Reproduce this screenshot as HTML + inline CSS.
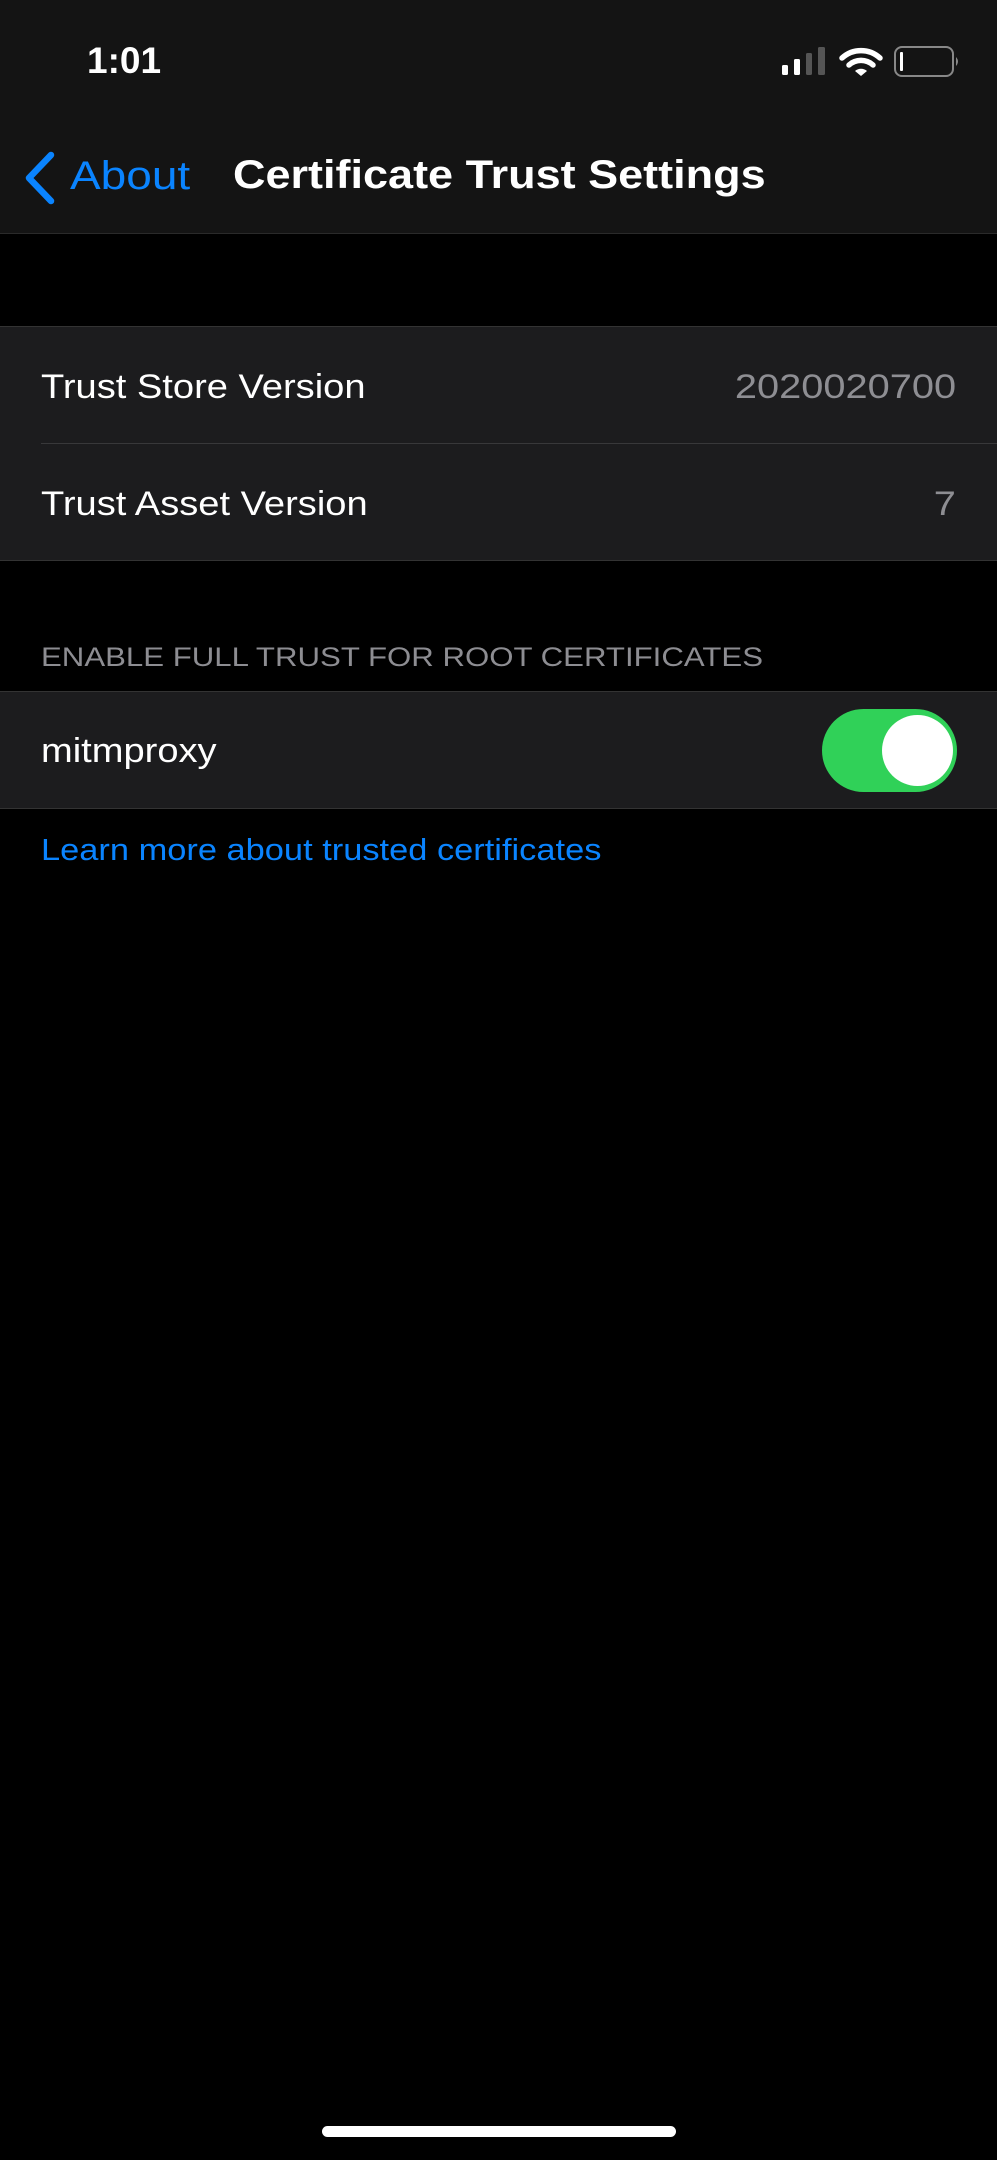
<!DOCTYPE html>
<html><head><meta charset="utf-8"><style>
*{margin:0;padding:0;box-sizing:border-box}
body{width:997px;height:2160px;background:#000;font-family:"Liberation Sans",sans-serif;position:relative;overflow:hidden;color:#fff}
.abs{position:absolute;white-space:nowrap}
.nav{left:0;top:0;width:997px;height:234px;background:#141414;border-bottom:1px solid #2a2a2a}
.row{left:0;width:997px;background:#1c1c1e}
.lbl{position:absolute;left:41px;font-size:34px;line-height:1;color:#fff;transform:scaleX(1.12);transform-origin:left;white-space:nowrap}
.val{position:absolute;right:41px;font-size:34px;line-height:1;color:#8e8e93;transform:scaleX(1.17);transform-origin:right;white-space:nowrap}
</style></head><body>
<div class="abs nav"></div>
<div class="abs" style="left:87px;top:42px;font-size:37px;font-weight:bold;line-height:1">1:01</div>
<svg class="abs" style="left:780px;top:44px" width="185" height="36" viewBox="780 44 185 36">
<rect x="782" y="65" width="6" height="10" rx="1.5" fill="#fff"/>
<rect x="794" y="59" width="6" height="16" rx="1.5" fill="#fff"/>
<rect x="806" y="53" width="6" height="22" rx="1.5" fill="#555"/>
<rect x="818" y="47" width="7" height="28" rx="1.5" fill="#555"/>
<path d="M842 58 A28 28 0 0 1 880 58" stroke="#fff" stroke-width="5.5" fill="none" stroke-linecap="round"/>
<path d="M849 65 A18 18 0 0 1 873 65" stroke="#fff" stroke-width="5.5" fill="none" stroke-linecap="round"/>
<path d="M855 71 L861 76 L867 71 A9 9 0 0 0 855 71Z" fill="#fff"/>
<rect x="895" y="47" width="58" height="29" rx="7" fill="none" stroke="#888" stroke-width="2"/>
<rect x="900" y="52" width="3" height="19" rx="1" fill="#fff"/>
<path d="M956 57 Q960 61.5 956 66Z" fill="#888"/>
</svg>
<svg class="abs" style="left:20px;top:150px" width="40" height="56" viewBox="0 0 40 56"><path d="M31 5 L9 28 L31 51" stroke="#0a84ff" stroke-width="6.5" fill="none" stroke-linecap="round" stroke-linejoin="round"/></svg>
<div class="abs" style="left:70px;top:156px;font-size:40px;color:#0a84ff;line-height:1;transform:scaleX(1.15);transform-origin:left">About</div>
<div class="abs" style="left:233px;top:155px;font-size:40px;font-weight:bold;line-height:1;transform:scaleX(1.125);transform-origin:left">Certificate Trust Settings</div>

<div class="abs row" style="top:326px;height:235px;border-top:1px solid #333;border-bottom:1px solid #333"></div>
<div class="abs" style="left:41px;top:443px;width:956px;height:1px;background:#38383a"></div>
<div class="lbl" style="top:370px">Trust Store Version</div>
<div class="val" style="top:370px">2020020700</div>
<div class="lbl" style="top:487px">Trust Asset Version</div>
<div class="val" style="top:487px">7</div>

<div class="abs" style="left:41px;top:644px;font-size:27px;color:#8d8d92;line-height:1;transform:scaleX(1.155);transform-origin:left">ENABLE FULL TRUST FOR ROOT CERTIFICATES</div>
<div class="abs row" style="top:691px;height:118px;border-top:1px solid #333;border-bottom:1px solid #333"></div>
<div class="lbl" style="top:734px">mitmproxy</div>
<div class="abs" style="left:822px;top:709px;width:135px;height:83px;border-radius:42px;background:#30d158"></div>
<div class="abs" style="left:882px;top:715px;width:71px;height:71px;border-radius:50%;background:#fff"></div>

<div class="abs" style="left:41px;top:834px;font-size:31px;color:#0a84ff;line-height:1;transform:scaleX(1.11);transform-origin:left">Learn more about trusted certificates</div>
<div class="abs" style="left:322px;top:2126px;width:354px;height:11px;border-radius:6px;background:#fff"></div>
</body></html>
